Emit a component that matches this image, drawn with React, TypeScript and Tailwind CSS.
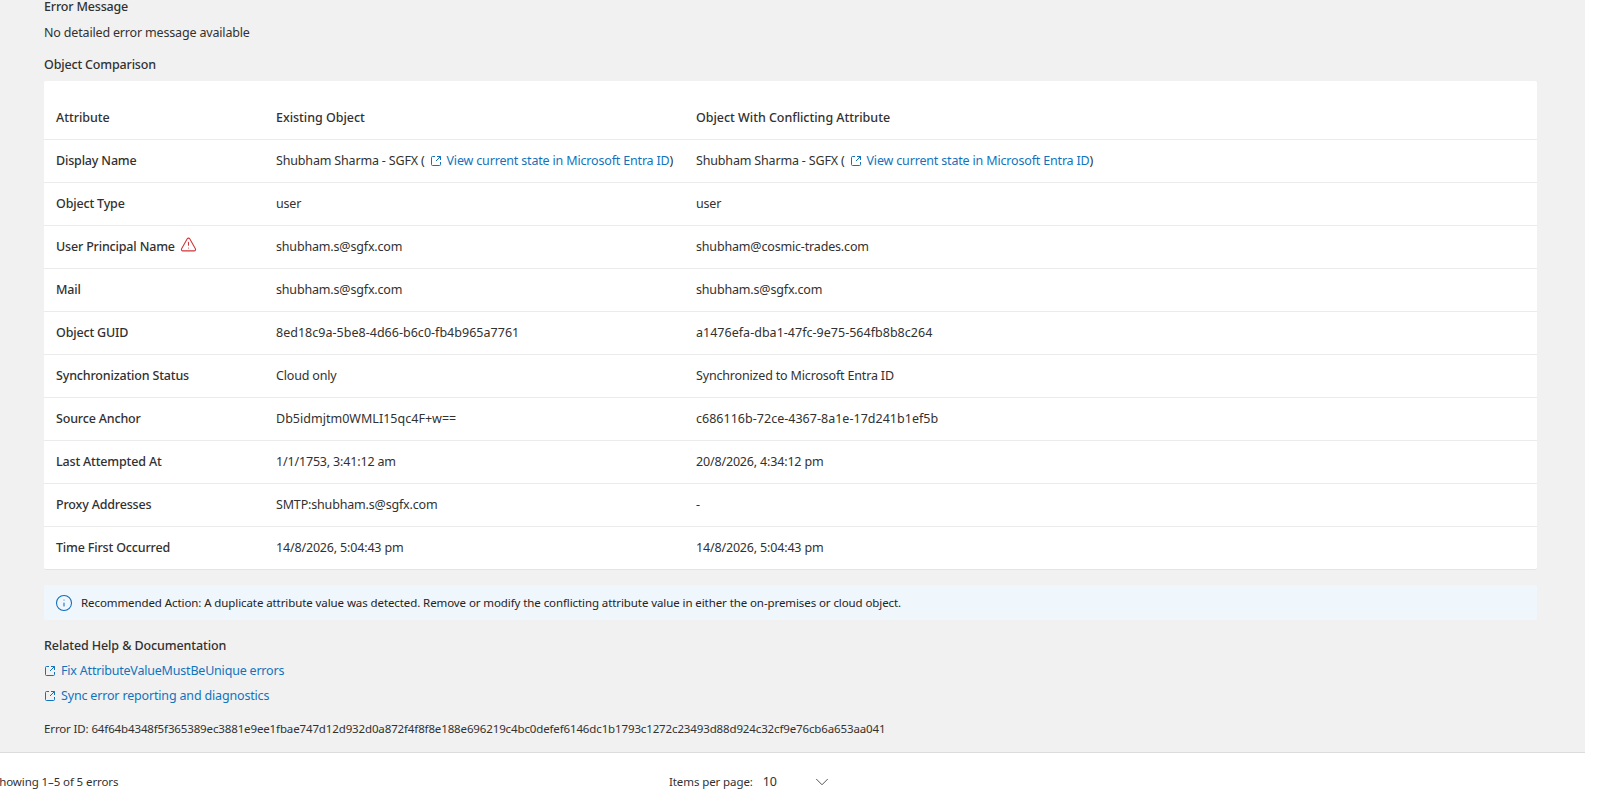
import { ChevronDown, Info, TriangleAlert } from 'lucide-react'

const OpenIcon = () => (
  <svg width="12" height="12" viewBox="0 0 12 12" fill="none" stroke="currentColor" strokeWidth="1" className="shrink-0">
    <path d="M5 1.5H2.5a1 1 0 0 0-1 1v7a1 1 0 0 0 1 1h7a1 1 0 0 0 1-1V7" />
    <path d="M7 1.5h3.5V5M10.5 1.5 6 6" />
  </svg>
)

const EntraLink = () => (
  <span className="inline-flex items-center whitespace-nowrap">
    Shubham Sharma - SGFX (
    <a className="inline-flex items-center text-[#1273bd] ml-[5px]">
      <OpenIcon />
      <span className="ml-[5px]">View current state in Microsoft Entra ID</span>
    </a>
    )
  </span>
)

const rows = [
  { label: 'Display Name', existing: <EntraLink />, conflicting: <EntraLink /> },
  { label: 'Object Type', existing: 'user', conflicting: 'user' },
  { label: 'User Principal Name', warn: true, existing: 'shubham.s@sgfx.com', conflicting: 'shubham@cosmic-trades.com' },
  { label: 'Mail', existing: 'shubham.s@sgfx.com', conflicting: 'shubham.s@sgfx.com' },
  { label: 'Object GUID', wide: true, existing: '8ed18c9a-5be8-4d66-b6c0-fb4b965a7761', conflicting: 'a1476efa-dba1-47fc-9e75-564fb8b8c264' },
  { label: 'Synchronization Status', existing: 'Cloud only', conflicting: 'Synchronized to Microsoft Entra ID' },
  { label: 'Source Anchor', wide: true, existing: 'Db5idmjtm0WMLI15qc4F+w==', conflicting: 'c686116b-72ce-4367-8a1e-17d241b1ef5b' },
  { label: 'Last Attempted At', existing: '1/1/1753, 3:41:12 am', conflicting: '20/8/2026, 4:34:12 pm' },
  { label: 'Proxy Addresses', existing: 'SMTP:shubham.s@sgfx.com', conflicting: '-' },
  { label: 'Time First Occurred', existing: '14/8/2026, 5:04:43 pm', conflicting: '14/8/2026, 5:04:43 pm' },
]

export default function App() {
  return (
    <div className="h-[807px] w-[1599px] overflow-hidden bg-white flex flex-col text-[12.5px] tracking-[-0.17px] leading-5 text-[#323130] font-['Noto_Sans',sans-serif]">
      <main className="h-[753px] w-[1585px] shrink-0 overflow-hidden bg-[#f1f1f1] border-b border-[#dcdcdc] flex flex-col justify-end pl-[44px] pr-[48px] pb-[13px]">
        <div className="font-medium">Error Message</div>
        <div className="mt-[6px]">No detailed error message available</div>
        <div className="mt-[12px] font-medium">Object Comparison</div>

        <div className="mt-[6px] shrink-0 bg-white rounded-[2px] border-b border-[#e4e4e4] pt-[16px]">
          <table className="w-full table-fixed border-collapse">
            <thead>
              <tr className="h-[42px] border-b border-[#ebebeb] text-left tracking-[-0.03px]">
                <th className="w-[220px] pl-3 font-medium">Attribute</th>
                <th className="w-[420px] pl-3 font-medium">Existing Object</th>
                <th className="pl-3 font-medium">Object With Conflicting Attribute</th>
              </tr>
            </thead>
            <tbody>
              {rows.map((row, i) => (
                <tr key={row.label} className={i < rows.length - 1 ? 'h-[43px] border-b border-[#ebebeb]' : 'h-[43px]'}>
                  <td className="pl-3 font-medium">
                    <span className="inline-flex items-center gap-[5px]">
                      {row.label}
                      {row.warn && <TriangleAlert size={17} strokeWidth={1.5} className="text-[#d13438] -mt-1" />}
                    </span>
                  </td>
                  <td className={row.wide ? 'pl-3 tracking-[0.02px]' : 'pl-3'}>{row.existing}</td>
                  <td className={row.wide ? 'pl-3 tracking-[0.02px]' : 'pl-3'}>{row.conflicting}</td>
                </tr>
              ))}
            </tbody>
          </table>
        </div>

        <div className="mt-[15px] h-[35px] shrink-0 bg-[#eff6fc] rounded-[2px] flex items-center pl-[11px] gap-[8px] text-[11.5px] tracking-[-0.09px] text-[#242424]">
          <Info size={18} strokeWidth={1.4} className="text-[#0f6cbd]" />
          Recommended Action: A duplicate attribute value was detected. Remove or modify the conflicting attribute value in either the on-premises or cloud object.
        </div>

        <div className="mt-[16px] font-medium tracking-[-0.1px]">Related Help &amp; Documentation</div>
        <a className="mt-[5px] flex items-center gap-[5px] text-[#1273bd] tracking-[-0.2px]">
          <OpenIcon />
          Fix AttributeValueMustBeUnique errors
        </a>
        <a className="mt-[5px] flex items-center gap-[5px] text-[#1273bd]">
          <OpenIcon />
          Sync error reporting and diagnostics
        </a>
        <div className="mt-[13px] text-[11.5px] tracking-[-0.13px]">
          Error ID: 64f64b4348f5f365389ec3881e9ee1fbae747d12d932d0a872f4f8f8e188e696219c4bc0defef6146dc1b1793c1272c23493d88d924c32cf9e76cb6a653aa041
        </div>
      </main>

      <footer className="flex-1 flex items-center pt-[3px] text-[11.5px] tracking-[-0.1px]">
        <span className="w-[669px] shrink-0 -ml-[7px]">Showing 1–5 of 5 errors</span>
        <span className="ml-[7px]">Items per page:</span>
        <span className="ml-[10px] w-[48px] text-[12.5px]">10</span>
        <ChevronDown size={22} strokeWidth={0.9} className="text-[#323130]" />
      </footer>
    </div>
  )
}
